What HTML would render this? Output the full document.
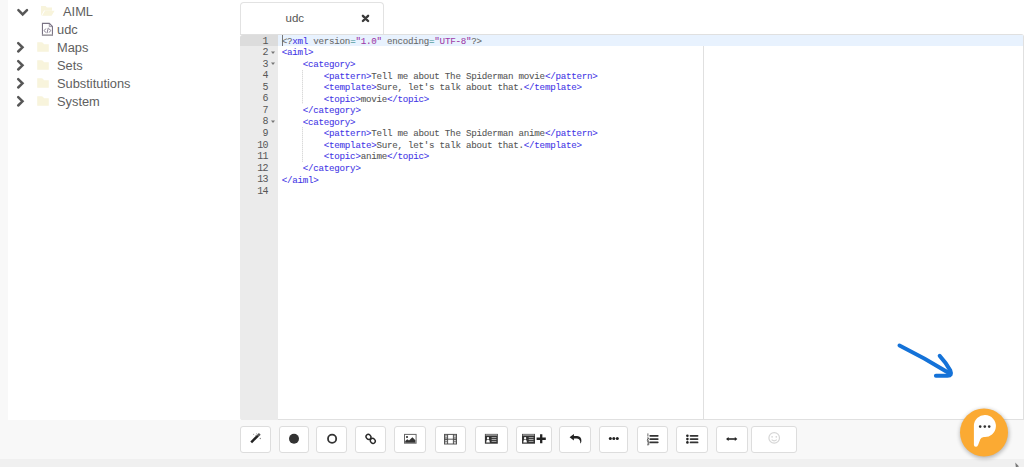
<!DOCTYPE html>
<html><head><meta charset="utf-8">
<style>
*{margin:0;padding:0;box-sizing:border-box}
html,body{width:1024px;height:467px;overflow:hidden}
body{background:#f8f8f8;font-family:"Liberation Sans",sans-serif;position:relative}
.abs{position:absolute}
#panel{left:8px;top:0;width:1016px;height:420px;background:#fff}
#band{left:0;top:459px;width:1024px;height:8px;background:#f0f0f0}
.tree{font-size:12.85px;color:#606060;white-space:nowrap;line-height:15px}
#tab{left:240px;top:2px;width:144px;height:34px;border:1px solid #e2e2e2;border-bottom:none;border-radius:4px 4px 0 0;background:#fff}
#tabtxt{left:285.5px;top:10.6px;font-size:11.5px;color:#555;line-height:15px}
#editor{left:240px;top:34px;width:784px;height:386px;background:#fff;border:1px solid #e0e0e0;border-left:none;border-radius:0 3px 0 3px;overflow:hidden}
#gutter{left:240px;top:35px;width:38px;height:384.5px;background:#ebebeb;border-radius:3px 0 0 3px}
#gact{left:240px;top:35px;width:38px;height:11.1px;background:#dcdcdc;border-radius:3px 0 0 0}
#lact{left:278px;top:35px;width:745px;height:11.1px;background:#e8f2fe}
#margin{left:703px;top:46px;width:1px;height:373.5px;background:#e0e0e0}
.code{-webkit-text-stroke:0.08px currentColor;font-family:"Liberation Mono",monospace;font-size:9.2px;letter-spacing:-0.25px;white-space:pre;color:#555;line-height:11.45px;height:11.45px}
.ln{font-family:"Liberation Mono",monospace;font-size:10px;letter-spacing:-0.6px;color:#575757;line-height:11.45px;text-align:right;width:28px;left:240px}
.t{color:#4537e6}
.s{color:#a03ca8}
.e{color:#3a8f8f}
.g{color:#6a6a6a}
.fold{left:271px;width:0;height:0;margin-top:4.6px;border-left:1.9px solid transparent;border-right:1.9px solid transparent;border-top:2.2px solid #777}
.guide{width:1px;background:repeating-linear-gradient(#dadada 0 1px,#f0f0f0 1px 2px)}
.btn{top:426px;height:27px;background:#fff;border:1px solid #ddd;border-radius:3px}
</style></head><body>
<div id="panel" class="abs"></div>
<div id="band" class="abs"></div>

<!-- tree -->
<svg class="abs" style="left:0;top:0" width="240" height="120" viewBox="0 0 240 120">
  <polyline points="18.4,10.2 22.7,14.4 27,10.2" fill="none" stroke="#575757" stroke-width="2.5" stroke-linecap="round"/>
  <g fill="none" stroke="#575757" stroke-width="2.5" stroke-linecap="round">
    <polyline points="18.2,43.2 22.5,47.3 18.2,51.5"/>
    <polyline points="18.2,61.2 22.5,65.3 18.2,69.5"/>
    <polyline points="18.2,79.2 22.5,83.3 18.2,87.5"/>
    <polyline points="18.2,97.2 22.5,101.3 18.2,105.5"/>
  </g>
  <!-- open folder -->
  <path d="M41,6 h4.5 l1.5,1.5 h5 v3 h-8 l-3,5.5 z M42,15.8 l3,-5 h9.6 l-3,5 z" fill="#f8f4dc"/>
  <!-- closed folders -->
  <g fill="#f8f4dc">
    <path d="M37.2,42.3 h4.6 q0.6,0 1,0.5 l1.3,1.5 h4.7 v7.4 h-11.6 z"/>
    <path d="M37.2,60.3 h4.6 q0.6,0 1,0.5 l1.3,1.5 h4.7 v7.4 h-11.6 z"/>
    <path d="M37.2,78.3 h4.6 q0.6,0 1,0.5 l1.3,1.5 h4.7 v7.4 h-11.6 z"/>
    <path d="M37.2,96.3 h4.6 q0.6,0 1,0.5 l1.3,1.5 h4.7 v7.4 h-11.6 z"/>
  </g>
  <!-- file icon -->
  <path d="M42.45,23.4 h6.9 l3.1,3.1 v8.7 h-10 z" fill="none" stroke="#7a7384" stroke-width="1.1"/>
  <path d="M49.3,23.4 v3.2 h3.1" fill="none" stroke="#8a8394" stroke-width="0.8"/>
  <path d="M42.45,34.8 h10" stroke="#b5b5b5" stroke-width="1.1"/>
  <path d="M45.8,28.6 l-1.6,2 l1.6,2 M49.1,28.6 l1.6,2 l-1.6,2 M48.3,27.8 l-1.3,5.4" fill="none" stroke="#857d8f" stroke-width="1"/>
</svg>
<div class="abs tree" style="left:63px;top:3.5px">AIML</div>
<div class="abs tree" style="left:57px;top:22px">udc</div>
<div class="abs tree" style="left:57px;top:39.6px">Maps</div>
<div class="abs tree" style="left:57px;top:57.6px">Sets</div>
<div class="abs tree" style="left:57px;top:75.6px">Substitutions</div>
<div class="abs tree" style="left:57px;top:93.6px">System</div>

<!-- tab -->
<div id="tab" class="abs"></div>
<div id="tabtxt" class="abs">udc</div>
<svg class="abs" style="left:358px;top:11px" width="16" height="16" viewBox="358 11 16 16">
  <path d="M362.9,15.8 L368.1,21 M368.1,15.8 L362.9,21" stroke="#3a3a3a" stroke-width="2.4" stroke-linecap="round"/>
</svg>

<!-- editor -->
<div id="editor" class="abs"></div>
<div id="gutter" class="abs"></div>
<div id="gact" class="abs"></div>
<div id="lact" class="abs"></div>
<div id="margin" class="abs"></div>

<div class="abs" style="left:281.7px;top:35.3px;width:1px;height:11px;background:#777"></div>
<div id="lines">
<div class="abs code" style="left:281.7px;top:35.90px"><span class="g">&lt;?</span><span class="t">xml</span><span class="g"> version</span><span class="e">=</span><span class="s">&quot;1.0&quot;</span><span class="g"> encoding</span><span class="e">=</span><span class="s">&quot;UTF-8&quot;</span><span class="g">?&gt;</span></div>
<div class="abs ln" style="top:35.60px">1</div>
<div class="abs code" style="left:281.7px;top:47.45px"><span class="t">&lt;aiml&gt;</span></div>
<div class="abs ln" style="top:47.15px">2</div>
<div class="abs code" style="left:281.7px;top:59.00px">    <span class="t">&lt;category&gt;</span></div>
<div class="abs ln" style="top:58.70px">3</div>
<div class="abs code" style="left:281.7px;top:70.55px">        <span class="t">&lt;pattern&gt;</span>Tell me about The Spiderman movie<span class="t">&lt;/pattern&gt;</span></div>
<div class="abs ln" style="top:70.25px">4</div>
<div class="abs code" style="left:281.7px;top:82.10px">        <span class="t">&lt;template&gt;</span>Sure, let&#x27;s talk about that.<span class="t">&lt;/template&gt;</span></div>
<div class="abs ln" style="top:81.80px">5</div>
<div class="abs code" style="left:281.7px;top:93.65px">        <span class="t">&lt;topic&gt;</span>movie<span class="t">&lt;/topic&gt;</span></div>
<div class="abs ln" style="top:93.35px">6</div>
<div class="abs code" style="left:281.7px;top:105.20px">    <span class="t">&lt;/category&gt;</span></div>
<div class="abs ln" style="top:104.90px">7</div>
<div class="abs code" style="left:281.7px;top:116.75px">    <span class="t">&lt;category&gt;</span></div>
<div class="abs ln" style="top:116.45px">8</div>
<div class="abs code" style="left:281.7px;top:128.30px">        <span class="t">&lt;pattern&gt;</span>Tell me about The Spiderman anime<span class="t">&lt;/pattern&gt;</span></div>
<div class="abs ln" style="top:128.00px">9</div>
<div class="abs code" style="left:281.7px;top:139.85px">        <span class="t">&lt;template&gt;</span>Sure, let&#x27;s talk about that.<span class="t">&lt;/template&gt;</span></div>
<div class="abs ln" style="top:139.55px">10</div>
<div class="abs code" style="left:281.7px;top:151.40px">        <span class="t">&lt;topic&gt;</span>anime<span class="t">&lt;/topic&gt;</span></div>
<div class="abs ln" style="top:151.10px">11</div>
<div class="abs code" style="left:281.7px;top:162.95px">    <span class="t">&lt;/category&gt;</span></div>
<div class="abs ln" style="top:162.65px">12</div>
<div class="abs code" style="left:281.7px;top:174.50px"><span class="t">&lt;/aiml&gt;</span></div>
<div class="abs ln" style="top:174.20px">13</div>
<div class="abs code" style="left:281.7px;top:186.05px"></div>
<div class="abs ln" style="top:185.75px">14</div>
<svg class="abs" style="left:270px;top:46.55px" width="6" height="8" viewBox="0 0 6 8"><polygon points="1,4.5 5,4.5 3,6.9" fill="#777"/></svg>
<svg class="abs" style="left:270px;top:58.10px" width="6" height="8" viewBox="0 0 6 8"><polygon points="1,4.5 5,4.5 3,6.9" fill="#777"/></svg>
<svg class="abs" style="left:270px;top:115.85px" width="6" height="8" viewBox="0 0 6 8"><polygon points="1,4.5 5,4.5 3,6.9" fill="#777"/></svg>
<div class="abs guide" style="left:302px;top:69.65px;height:34.65px"></div>
<div class="abs guide" style="left:302px;top:127.40px;height:34.65px"></div>
</div>

<!-- toolbar -->
<div class="abs btn" style="left:240px;width:31px"></div>
<div class="abs btn" style="left:279px;width:30px"></div>
<div class="abs btn" style="left:316px;width:31px"></div>
<div class="abs btn" style="left:355px;width:31px"></div>
<div class="abs btn" style="left:394px;width:32px"></div>
<div class="abs btn" style="left:435px;width:31px"></div>
<div class="abs btn" style="left:475px;width:33px"></div>
<div class="abs btn" style="left:516px;width:36px"></div>
<div class="abs btn" style="left:559px;width:32px"></div>
<div class="abs btn" style="left:599px;width:29px"></div>
<div class="abs btn" style="left:637px;width:31px"></div>
<div class="abs btn" style="left:676px;width:32px"></div>
<div class="abs btn" style="left:716px;width:32px"></div>
<div class="abs btn" style="left:751px;width:46px"></div>

<!-- toolbar icons -->
<svg class="abs" style="left:236px;top:420px" width="570" height="40" viewBox="236 420 570 40">
  <!-- wand -->
  <path d="M251.2,442.3 L258,435.6" stroke="#222" stroke-width="2.5"/>
  <path d="M258,435.6 L259.8,433.8" stroke="#555" stroke-width="2.5"/>
  <circle cx="253.6" cy="434.3" r="0.6" fill="#aaa"/>
  <circle cx="256" cy="435.6" r="0.7" fill="#888"/>
  <circle cx="256.6" cy="433.8" r="0.6" fill="#aaa"/>
  <circle cx="260.3" cy="438.5" r="0.7" fill="#888"/>
  <!-- filled circle -->
  <circle cx="294" cy="438.8" r="5" fill="#333"/>
  <!-- hollow circle -->
  <circle cx="332.1" cy="438.8" r="4.1" fill="none" stroke="#333" stroke-width="1.8"/>
  <!-- link -->
  <ellipse cx="368.5" cy="436.8" rx="2.6" ry="2.3" transform="rotate(45 368.5 436.8)" fill="none" stroke="#2a2a2a" stroke-width="1.4"/>
  <ellipse cx="372.8" cy="440.8" rx="2.6" ry="2.3" transform="rotate(45 372.8 440.8)" fill="none" stroke="#2a2a2a" stroke-width="1.4"/>
  <!-- image -->
  <rect x="404.5" y="434.4" width="11.6" height="8.8" fill="#fff" stroke="#666" stroke-width="1"/>
  <circle cx="407" cy="437" r="1.1" fill="#333"/>
  <path d="M405.2,442.8 V441 L407.3,439.3 L409,440.6 L412.4,437.2 L415.4,440.2 V442.8 Z" fill="#333"/>
  <!-- film -->
  <rect x="444.5" y="434.4" width="12" height="9.6" fill="#fff" stroke="#555" stroke-width="1"/>
  <rect x="445" y="434.9" width="2.3" height="8.6" fill="#777"/>
  <rect x="453.7" y="434.9" width="2.3" height="8.6" fill="#777"/>
  <rect x="445.3" y="435.5" width="1.6" height="1.4" fill="#ddd"/>
  <rect x="445.3" y="437.6" width="1.6" height="1.2" fill="#ddd"/>
  <rect x="445.3" y="439.9" width="1.6" height="1.2" fill="#ddd"/>
  <rect x="445.3" y="441.9" width="1.6" height="1.4" fill="#ddd"/>
  <rect x="454.1" y="435.5" width="1.6" height="1.4" fill="#ddd"/>
  <rect x="454.1" y="437.6" width="1.6" height="1.2" fill="#ddd"/>
  <rect x="454.1" y="439.9" width="1.6" height="1.2" fill="#ddd"/>
  <rect x="454.1" y="441.9" width="1.6" height="1.4" fill="#ddd"/>
  <path d="M447.6,434.4 V444 M453.4,434.4 V444 M444.5,439.2 H456.5" stroke="#444" stroke-width="0.9"/>
  <!-- card -->
  <rect x="484.9" y="433.9" width="12.9" height="9.8" fill="#333"/>
  <rect x="485.5" y="434.2" width="11.7" height="1.6" fill="#999"/>
  <circle cx="488" cy="438.2" r="1.15" fill="#fff"/><path d="M486.2,442.6 Q486.3,439.6 488,439.6 Q489.7,439.6 489.8,442.6 Z" fill="#fff"/>
  <path d="M491.6,437.6 H496.4 M491.6,439.5 H496.4 M491.6,441.4 H496.4" stroke="#aaa" stroke-width="1"/>
  <!-- card plus -->
  <rect x="522" y="433.9" width="13" height="9.8" fill="#333"/>
  <rect x="522.6" y="434.2" width="11.8" height="1.6" fill="#999"/>
  <circle cx="525.1" cy="438.2" r="1.15" fill="#fff"/><path d="M523.3,442.6 Q523.4,439.6 525.1,439.6 Q526.8,439.6 526.9,442.6 Z" fill="#fff"/>
  <path d="M528.7,437.6 H533.5 M528.7,439.5 H533.5 M528.7,441.4 H533.5" stroke="#aaa" stroke-width="1"/>
  <path d="M536.6,438.75 H545.8 M541.2,434.2 V443.3" stroke="#222" stroke-width="2.3"/>
  <!-- undo -->
  <path d="M569.6,437.3 L573.9,434 V436.1 H577.2 Q581.6,436.3 581.4,441.2 Q581,443.6 580.3,443.6 Q580.6,439.3 577,438.6 H573.9 V440.6 Z" fill="#222"/>
  <!-- dots -->
  <circle cx="610.3" cy="438.4" r="1.5" fill="#222"/>
  <circle cx="613.8" cy="438.4" r="1.5" fill="#222"/>
  <circle cx="617.3" cy="438.4" r="1.5" fill="#222"/>
  <!-- ol -->
  <path d="M650.2,435.8 H657.8 M650.2,439.1 H657.8 M650.2,442.3 H657.8" stroke="#333" stroke-width="1.7" stroke-linecap="round"/>
  <path d="M647.9,433.4 V436.5 M647,438 H648.8 L647,440.2 H648.8 M647,441.3 H648.8 V444.8 H647 M647.2,443 H648.8" fill="none" stroke="#444" stroke-width="0.8"/>
  <!-- ul -->
  <circle cx="687.4" cy="435.8" r="1.3" fill="#222"/>
  <circle cx="687.4" cy="439.1" r="1.3" fill="#222"/>
  <circle cx="687.4" cy="442.4" r="1.3" fill="#222"/>
  <path d="M690.5,435.8 H697.6 M690.5,439.1 H697.6 M690.5,442.4 H697.6" stroke="#333" stroke-width="1.7" stroke-linecap="round"/>
  <!-- arrows-h -->
  <path d="M727.5,439 H736" stroke="#333" stroke-width="1.7"/>
  <path d="M726,439 L728.6,436.9 V441.1 Z M737.4,439 L734.8,436.9 V441.1 Z" fill="#222"/>
  <!-- smiley -->
  <circle cx="774.2" cy="437.9" r="5.3" fill="none" stroke="#d6d6d6" stroke-width="1.2"/>
  <circle cx="772.1" cy="436.8" r="0.85" fill="#d6d6d6"/>
  <circle cx="776.3" cy="436.8" r="0.85" fill="#d6d6d6"/>
  <path d="M771.6,439.6 Q774.2,442.2 776.8,439.6" fill="none" stroke="#d6d6d6" stroke-width="1.1"/>
</svg>

<!-- arrow -->
<svg class="abs" style="left:890px;top:335px" width="70" height="50" viewBox="890 335 70 50">
  <path d="M899.5,345.5 Q924,357.6 948.5,372.8" fill="none" stroke="#1472d8" stroke-width="4" stroke-linecap="round"/>
  <path d="M939.7,355.8 Q946,362.5 950.3,370.5 Q952.5,375.8 947.5,375.8 L935.9,375.8" fill="none" stroke="#1472d8" stroke-width="4" stroke-linecap="round" stroke-linejoin="round"/>
</svg>

<!-- chat -->
<svg class="abs" style="left:950px;top:400px" width="70" height="67" viewBox="950 400 70 67">
  <defs><filter id="sh" x="-30%" y="-30%" width="160%" height="160%"><feGaussianBlur stdDeviation="2.2"/></filter></defs>
  <circle cx="984.5" cy="433.8" r="24.5" fill="#000" opacity="0.28" filter="url(#sh)"/>
  <circle cx="984" cy="432.5" r="24" fill="#fbaa33"/>
  <path d="M973.9,426 A11,11 0 1 1 983.8,436.95 Q981.2,437.3 980.3,439.3 L978,445.2 Q977.3,446.8 975.7,446.8 Q973.9,446.7 973.9,444.8 Z" fill="#fff"/>
  <circle cx="980.2" cy="426.6" r="1.3" fill="#333"/>
  <circle cx="984.8" cy="426.6" r="1.3" fill="#333"/>
  <circle cx="989.2" cy="426.6" r="1.3" fill="#333"/>
</svg>
<svg class="abs" style="left:1010px;top:458px" width="14" height="9" viewBox="1010 458 14 9"><path d="M1015.3,462.6 L1019,466.5 L1017,467 L1015.8,467 Z" fill="#777"/></svg>
</body></html>
